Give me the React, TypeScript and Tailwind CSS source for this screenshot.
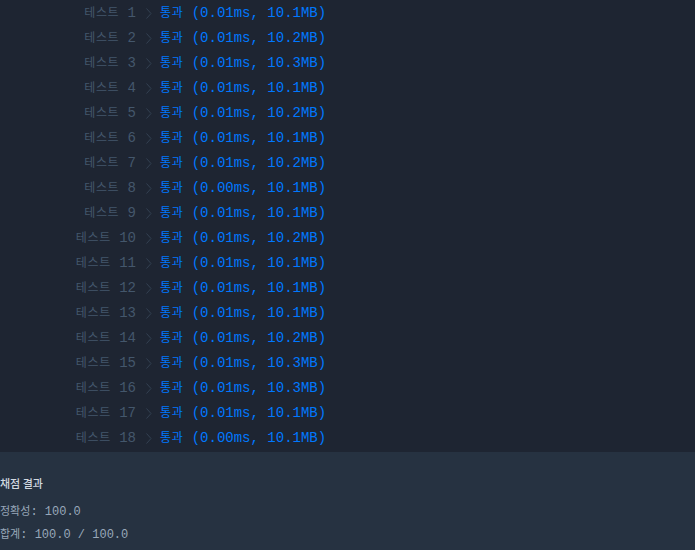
const results = [
  { t: '0.01ms', m: '10.1MB' },
  { t: '0.01ms', m: '10.2MB' },
  { t: '0.01ms', m: '10.3MB' },
  { t: '0.01ms', m: '10.1MB' },
  { t: '0.01ms', m: '10.2MB' },
  { t: '0.01ms', m: '10.1MB' },
  { t: '0.01ms', m: '10.2MB' },
  { t: '0.00ms', m: '10.1MB' },
  { t: '0.01ms', m: '10.1MB' },
  { t: '0.01ms', m: '10.2MB' },
  { t: '0.01ms', m: '10.1MB' },
  { t: '0.01ms', m: '10.1MB' },
  { t: '0.01ms', m: '10.1MB' },
  { t: '0.01ms', m: '10.2MB' },
  { t: '0.01ms', m: '10.3MB' },
  { t: '0.01ms', m: '10.3MB' },
  { t: '0.01ms', m: '10.1MB' },
  { t: '0.00ms', m: '10.1MB' },
];

const mono = "font-['Liberation_Mono','Noto_Sans_CJK_KR',monospace]";
const ko = "font-['Noto_Sans_CJK_KR','Noto_Sans_CJK_SC',sans-serif] text-[12px] tracking-[0.6px]";
const koSmall = "font-['Noto_Sans_CJK_KR','Noto_Sans_CJK_SC',sans-serif] text-[11px]";

const Chevron = () => (
  <svg width="6" height="11" viewBox="0 0 6 11" className="ml-[10px] mr-[8px]">
    <polyline points="0.5,0.5 5,5.5 0.5,10.5" fill="none" stroke="#334152" strokeWidth="1" />
  </svg>
);

export default function App() {
  return (
    <div className={`w-[695px] h-[550px] overflow-hidden bg-[#1e2532] flex flex-col ${mono}`}>
      <div className="flex flex-col pt-[1px] h-[452px]">
        {results.map((r, i) => (
          <div key={i} className="flex items-center h-[25px] text-[14px] whitespace-pre">
            <div className="w-[136px] flex justify-end items-baseline text-[#44576c]">
              <span className={ko}>테스트</span>
              <span> {i + 1}</span>
            </div>
            <Chevron />
            <div className="flex items-baseline text-[#0078ff]">
              <span className={ko}>통과</span>
              <span> ({r.t}, {r.m})</span>
            </div>
          </div>
        ))}
      </div>
      <div className="flex-1 bg-[#263241] pt-[20px] text-[12px] whitespace-pre">
        <div className="h-[23px] flex items-center text-[#d2d9e0]">
          <span className={`${koSmall} font-medium`}>채점 결과</span>
        </div>
        <div className="h-[26px] mt-[3px] flex items-center">
          <div className="flex items-baseline text-[#98a8b9]">
            <span className={koSmall}>정확성</span>
            <span>: 100.0</span>
          </div>
        </div>
        <div className="h-[20px] flex items-center">
          <div className="flex items-baseline text-[#98a8b9]">
            <span className={koSmall}>합계</span>
            <span>: 100.0 / 100.0</span>
          </div>
        </div>
      </div>
    </div>
  );
}
